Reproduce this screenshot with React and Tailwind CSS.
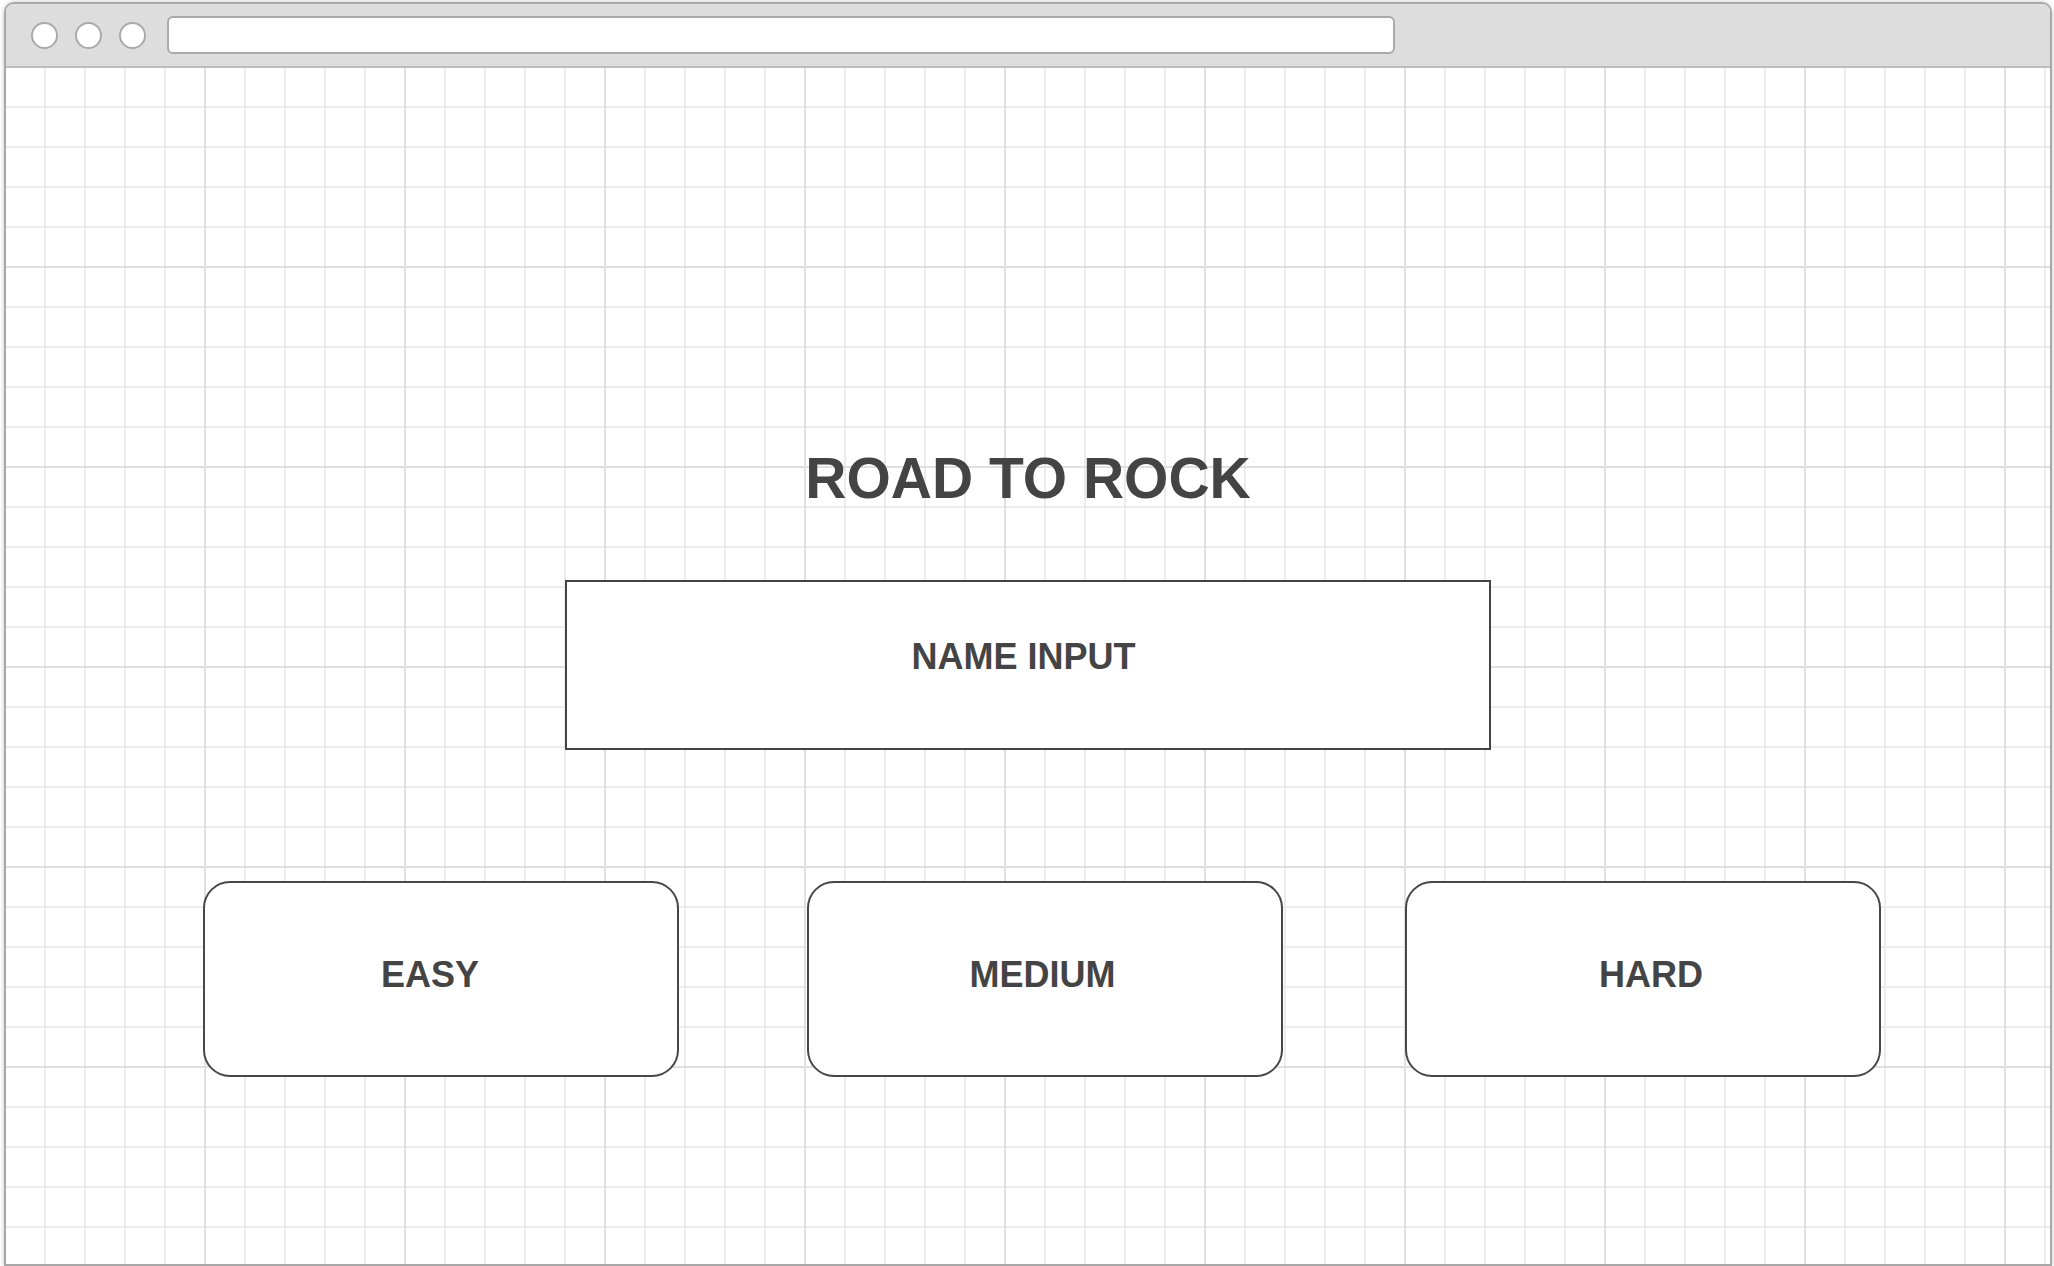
import React from 'react';

const gridBg =
  '[background-image:linear-gradient(to_right,transparent_198px,#e0e0e0_198px),linear-gradient(to_bottom,transparent_198px,#e0e0e0_198px),linear-gradient(to_right,transparent_38px,#ececec_38px),linear-gradient(to_bottom,transparent_38px,#ececec_38px)] [background-size:200px_200px,200px_200px,40px_40px,40px_40px]';

const levels = [
  { id: 'easy', label: 'EASY', space: 'pr-[22px]' },
  { id: 'medium', label: 'MEDIUM', space: 'ml-[128px] pr-[5px]' },
  { id: 'hard', label: 'HARD', space: 'ml-[122px] pl-[16px]' },
];

const App = () => {
  return (
    <div className="w-full h-[1266px] bg-white pt-[2px] pl-[4px] overflow-hidden font-['Liberation_Sans',Arial,sans-serif] text-[#444]">
      <div className="w-[2048px] h-[1264px] flex flex-col border-2 border-[#a8a8a8] rounded-t-[10px] overflow-hidden shadow-[0_0_4px_rgba(0,0,0,0.25)]">
        {/* browser bar */}
        <div className="h-[64px] shrink-0 flex items-center pl-[25px] bg-[#dddddd] border-b-2 border-[#bdbdbd]">
          <div className="flex gap-[17px]">
            <span className="w-[27px] h-[27px] rounded-full bg-white border-2 border-[#aaa]"></span>
            <span className="w-[27px] h-[27px] rounded-full bg-white border-2 border-[#aaa]"></span>
            <span className="w-[27px] h-[27px] rounded-full bg-white border-2 border-[#aaa]"></span>
          </div>
          <div className="ml-[21px] w-[1228px] h-[38px] rounded-[6px] bg-white border-2 border-[#aaa]"></div>
        </div>

        {/* canvas */}
        <div className={`flex-1 flex flex-col items-center bg-white ${gridBg}`}>
          <h1 className="mt-[382px] text-[57px] leading-none font-bold">ROAD TO ROCK</h1>

          <div className="mt-[73px] w-[926px] h-[170px] flex items-center justify-center bg-white border-2 border-[#444] pb-[16px] pr-[9px]">
            <span className="text-[36px] leading-none font-bold">NAME INPUT</span>
          </div>

          <div className="self-stretch mt-[131px] flex pl-[197px]">
            {levels.map((level) => (
              <button
                key={level.id}
                className={`w-[476px] h-[196px] flex items-center justify-center bg-white border-2 border-[#474747] rounded-[27px] pb-[8px] ${level.space}`}
              >
                <span className="text-[36px] leading-none font-bold text-[#444]">{level.label}</span>
              </button>
            ))}
          </div>
        </div>
      </div>
    </div>
  );
};

export default App;
